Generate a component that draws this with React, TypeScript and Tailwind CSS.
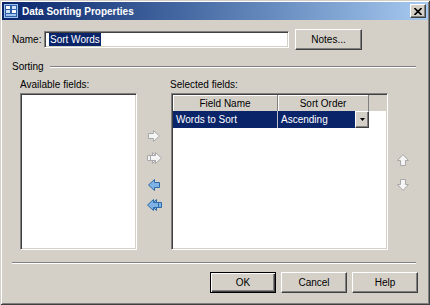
const sunken =
  "border border-t-[#808080] border-l-[#808080] border-b-white border-r-white shadow-[inset_1px_1px_0_#404040,inset_-1px_-1px_0_#d4d0c8]";
const raised =
  "border border-t-white border-l-white border-b-[#404040] border-r-[#404040] shadow-[inset_-1px_-1px_0_#808080]";

const RightArrow = ({ x = 0 }: { x?: number }) => (
  <path
    transform={`translate(${x} 0)`}
    d="M2.5 5.5 H7.5 V2.5 L13.5 8 L7.5 13.5 V10.5 H2.5 Z"
    fill="#f4f4f4"
    stroke="#a8a8a8"
    strokeLinejoin="round"
  />
);

const LeftArrow = ({ x = 0 }: { x?: number }) => (
  <path
    transform={`translate(${x} 0)`}
    d="M13.5 5.5 H8.5 V2.5 L2.5 8 L8.5 13.5 V10.5 H13.5 Z"
    fill="#7fb2e5"
    stroke="#2f6aa8"
    strokeLinejoin="round"
  />
);

function Icon({ children }: { children: React.ReactNode }) {
  return (
    <svg width="16" height="16" viewBox="0 0 16 16">
      {children}
    </svg>
  );
}

function Button({ label, primary }: { label: string; primary?: boolean }) {
  return (
    <div
      className={
        primary
          ? "w-[66px] h-[21px] flex items-center justify-center border border-black shadow-[inset_1px_1px_0_#fff,inset_-1px_-1px_0_#404040,inset_-2px_-2px_0_#808080]"
          : `w-[66px] h-[21px] flex items-center justify-center ${raised}`
      }
    >
      {label}
    </div>
  );
}

export default function App() {
  return (
    <div
      className="w-[430px] h-[305px] bg-[#d4d0c8] flex flex-col p-[2px] text-[10px] text-black shadow-[inset_1px_1px_0_#d4d0c8,inset_-1px_-1px_0_#404040,inset_2px_2px_0_#fff,inset_-2px_-2px_0_#808080]"
      style={{ fontFamily: '"Liberation Sans", Arial, sans-serif' }}
    >
      {/* title bar */}
      <div className="h-[18px] flex items-center bg-gradient-to-r from-[#0a246a] to-[#a6caf0] pl-[2px] pr-[2px]">
        <svg width="14" height="14" viewBox="0 0 14 14" className="mr-[4px]">
          <rect x="0.5" y="0.5" width="13" height="13" fill="#2d5fa8" stroke="#9ec3ee" />
          <rect x="2" y="2" width="4" height="3" fill="#ffffff" />
          <rect x="8" y="2" width="4" height="3" fill="#cfe2f7" />
          <rect x="2" y="6" width="4" height="3" fill="#cfe2f7" />
          <rect x="8" y="6" width="4" height="3" fill="#ffffff" />
          <rect x="2" y="10" width="10" height="2" fill="#9ec3ee" />
        </svg>
        <span className="text-white font-bold">Data Sorting Properties</span>
        <div className={`ml-auto w-[16px] h-[14px] bg-[#d4d0c8] flex items-center justify-center ${raised}`}>
          <svg width="8" height="7" viewBox="0 0 8 7">
            <path d="M0.5 0 L7.5 7 M7.5 0 L0.5 7" stroke="#000" strokeWidth="1.6" />
          </svg>
        </div>
      </div>

      <div className="flex flex-col px-[10px]">
        {/* name row */}
        <div className="flex items-center mt-[9px] h-[21px]">
          <span className="w-[32px]">Name:</span>
          <div className={`w-[245px] h-[17px] bg-white flex items-center pl-[4px] ${sunken}`}>
            <span className="bg-[#0a246a] text-white leading-[13px] px-[1px]">Sort Words</span>
          </div>
          <div className={`ml-[6px] w-[67px] h-[21px] flex items-center justify-center ${raised}`}>
            Notes...
          </div>
        </div>

        {/* sorting group header */}
        <div className="flex items-center mt-[10px] h-[13px]">
          <span>Sorting</span>
          <div className="flex-1 ml-[6px] mr-[2px] border-t border-t-[#808080] border-b border-b-white" />
        </div>

        {/* lists */}
        <div className="flex mt-[6px] pl-[8px]">
          <div className="w-[117px] flex flex-col">
            <div className="h-[14px] leading-[12px]">Available fields:</div>
            <div className={`h-[157px] bg-white ${sunken}`} />
          </div>

          <div className="w-[34px] flex flex-col items-center pt-[49px]">
            <Icon>
              <RightArrow />
            </Icon>
            <div className="mt-[6px]">
              <Icon>
                <RightArrow x={-1} />
                <RightArrow x={2} />
              </Icon>
            </div>
            <div className="mt-[11px]">
              <Icon>
                <LeftArrow />
              </Icon>
            </div>
            <div className="mt-[4px]">
              <Icon>
                <LeftArrow x={2} />
                <LeftArrow x={-1} />
              </Icon>
            </div>
          </div>

          <div className="w-[217px] flex flex-col">
            <div className="h-[14px] leading-[12px] -ml-[1px]">Selected fields:</div>
            <div className={`h-[157px] bg-white flex flex-col p-[1px] ${sunken}`}>
              <div className="flex h-[16px] bg-[#d4d0c8]">
                <div className="w-[105px] flex items-center justify-center border-r border-r-[#808080] shadow-[inset_1px_1px_0_#fff]">
                  Field Name
                </div>
                <div className="w-[91px] flex items-center justify-center border-r border-r-[#808080] shadow-[inset_1px_1px_0_#fff]">
                  Sort Order
                </div>
              </div>
              <div className="flex h-[17px]">
                <div className="w-[105px] bg-[#0a246a] text-white flex items-center pl-[3px] border-r border-r-[#c0c0c0]">
                  Words to Sort
                </div>
                <div className="w-[77px] bg-[#0a246a] text-white flex items-center pl-[3px]">Ascending</div>
                <div className={`w-[14px] bg-[#d4d0c8] flex items-center justify-center ${raised}`}>
                  <svg width="5" height="3" viewBox="0 0 5 3">
                    <path d="M0 0 H5 L2.5 3 Z" fill="#000" />
                  </svg>
                </div>
              </div>
            </div>
          </div>

          <div className="flex-1 flex flex-col items-center pt-[73px]">
            <Icon>
              <path
                d="M5.5 13.5 V8.5 H2.5 L8 2.5 L13.5 8.5 H10.5 V13.5 Z"
                fill="#f4f4f4"
                stroke="#a8a8a8"
                strokeLinejoin="round"
              />
            </Icon>
            <div className="mt-[9px]">
              <Icon>
                <path
                  d="M5.5 2.5 V7.5 H2.5 L8 13.5 L13.5 7.5 H10.5 V2.5 Z"
                  fill="#f4f4f4"
                  stroke="#a8a8a8"
                  strokeLinejoin="round"
                />
              </Icon>
            </div>
          </div>
        </div>

        {/* separator */}
        <div className="mt-[12px] mr-[2px] border-t border-t-[#808080] border-b border-b-white" />

        {/* buttons */}
        <div className="flex justify-end gap-[5px] mt-[8px]">
          <Button label="OK" primary />
          <Button label="Cancel" />
          <Button label="Help" />
        </div>
      </div>
    </div>
  );
}
